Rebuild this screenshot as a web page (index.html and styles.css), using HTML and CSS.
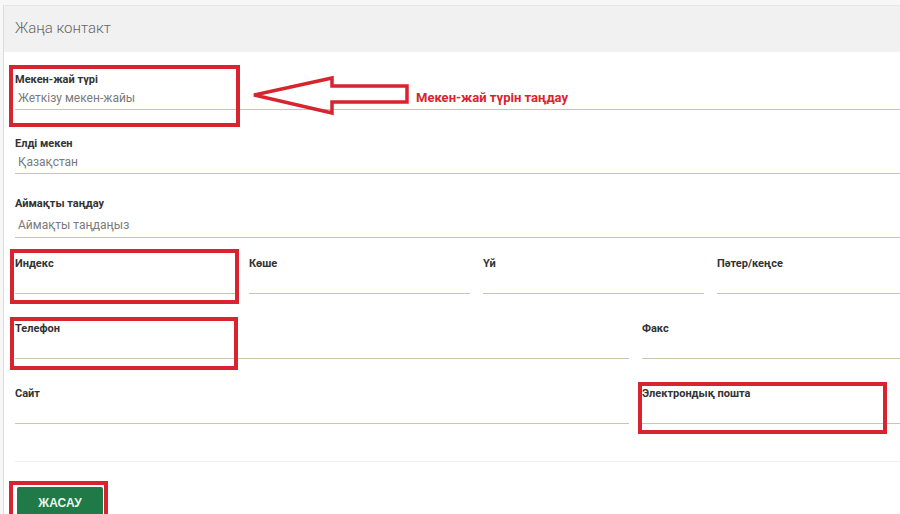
FILE: index.html
```html
<!DOCTYPE html>
<html lang="kk">
<head>
  <meta charset="UTF-8" />
  <title>Жаңа контакт</title>
  <link rel="stylesheet" href="styles.css">
</head>
<body>

  <div class="card">
    <div class="card-header">Жаңа контакт</div>

    <form class="card-body">
      <!-- Address type -->
      <div class="field field-first">
        <label>Мекен-жай түрі</label>
        <div class="input">Жеткізу мекен-жайы</div>
        <span class="mark mark-type"></span>
        <svg class="arrow" width="165" height="48" viewBox="0 0 165 48">
          <polygon points="6,24 84,7 84,15 159,15 159,31 84,31 84,42" fill="none" stroke="#d8242e" stroke-width="3.5" stroke-linejoin="miter" />
        </svg>
        <span class="hint">Мекен-жай түрін таңдау</span>
      </div>

      <div class="field">
        <label>Елді мекен</label>
        <div class="input">Қазақстан</div>
      </div>

      <div class="field field-region">
        <label>Аймақты таңдау</label>
        <div class="input">Аймақты таңдаңыз</div>
      </div>

      <!-- Address details -->
      <div class="row row-four">
        <div class="field">
          <label>Индекс</label>
          <div class="input"></div>
          <span class="mark mark-index"></span>
        </div>
        <div class="field">
          <label>Көше</label>
          <div class="input"></div>
        </div>
        <div class="field">
          <label>Үй</label>
          <div class="input"></div>
        </div>
        <div class="field">
          <label>Пәтер/кеңсе</label>
          <div class="input"></div>
        </div>
      </div>

      <div class="row row-two">
        <div class="field">
          <label>Телефон</label>
          <div class="input"></div>
          <span class="mark mark-phone"></span>
        </div>
        <div class="field">
          <label>Факс</label>
          <div class="input"></div>
        </div>
      </div>

      <div class="row row-two">
        <div class="field">
          <label>Сайт</label>
          <div class="input"></div>
        </div>
        <div class="field">
          <label>Электрондық пошта</label>
          <div class="input"></div>
          <span class="mark mark-email"></span>
        </div>
      </div>

      <div class="divider"></div>

      <div class="actions">
        <button type="button" class="btn-create">ЖАСАУ</button>
        <span class="mark mark-btn"></span>
      </div>
    </form>
  </div>

</body>
</html>
```

FILE: styles.css
```css
body {
  margin: 0;
  padding: 0;
  background: #f7f7f7;
  font-family: Roboto, 'Liberation Sans', sans-serif;
  overflow: hidden;
  height: 514px;
}

.card {
  margin: 5px 0 0 3px;
  width: 950px;
  height: 600px;
  background: #fff;
  border-left: 1px solid #dcdcdc;
  border-top: 1px solid #e6e6e6;
}

.card-header {
  height: 46px;
  line-height: 45px;
  padding-left: 11px;
  background: #f1f1f1;
  color: #666;
  font-size: 15px;
  font-weight: 300;
}

.card-body {
  padding: 21px 16px 0 11px;
}

.field {
  position: relative;
  margin-bottom: 23px;
}

.field-first {
  margin-bottom: 27px;
}

.field label {
  display: block;
  height: 14px;
  line-height: 14px;
  font-size: 11px;
  font-weight: bold;
  color: #333;
}

.input {
  height: 21px;
  line-height: 21px;
  margin-top: 1px;
  padding-left: 3px;
  font-size: 12px;
  color: #7a7a7a;
  border-bottom: 1px solid #c9c6ad;
}

.field-region {
  margin-bottom: 19px;
}

.field-region .input {
  margin-top: 3px;
  height: 23px;
  line-height: 23px;
}

.row {
  display: grid;
  column-gap: 13px;
  margin-bottom: 28px;
}

.row .field {
  margin-bottom: 0;
}

.row-four {
  grid-template-columns: repeat(4, 1fr);
}

.row-two {
  grid-template-columns: 614px 1fr;
}

.divider {
  height: 1px;
  background: #efefef;
  margin-top: 37px;
}

.actions {
  position: relative;
  padding: 25px 0 0 2px;
}

.btn-create {
  width: 86px;
  height: 32px;
  padding: 0;
  background: #1f7a47;
  color: #eef5ea;
  border: none;
  border-radius: 2px;
  font-family: 'Liberation Sans', Arial, sans-serif;
  font-size: 12px;
  font-weight: bold;
}

/* red annotation frames */
.mark {
  position: absolute;
  box-sizing: border-box;
  border: 4px solid #d8242e;
}

.mark-type {
  left: -6px;
  top: -8px;
  width: 231px;
  height: 62px;
}

.mark-index {
  left: -5px;
  top: -8px;
  width: 229px;
  height: 55px;
}

.mark-phone {
  left: -5px;
  top: -5px;
  width: 228px;
  height: 53px;
}

.mark-email {
  left: -4px;
  top: -5px;
  width: 249px;
  height: 52px;
}

.mark-btn {
  left: -6px;
  top: 19px;
  width: 99px;
  height: 42px;
}

.arrow {
  position: absolute;
  left: 233px;
  top: -2px;
}

.hint {
  position: absolute;
  left: 401px;
  top: 18px;
  color: #d8242e;
  font-size: 13px;
  font-weight: bold;
  line-height: 14px;
}
```
